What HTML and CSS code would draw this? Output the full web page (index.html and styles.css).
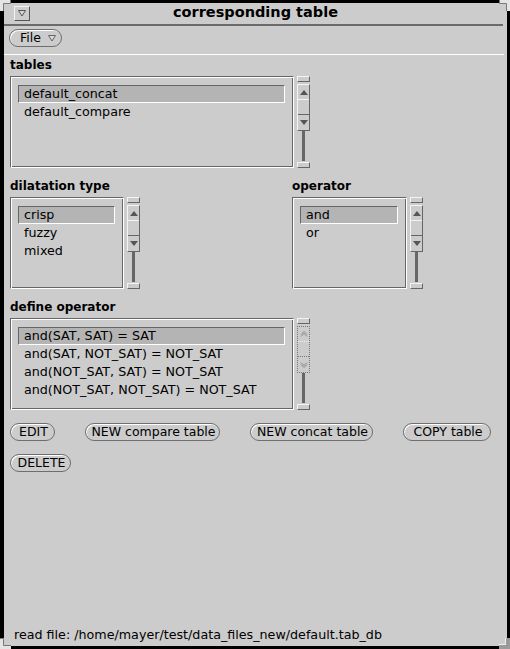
FILE: index.html
```html
<!DOCTYPE html>
<html>
<head>
<meta charset="utf-8">
<title>corresponding table</title>
<link rel="stylesheet" href="styles.css">
</head>
<body>
<div class="frame">
  <svg class="corner tl" width="11" height="11" viewBox="0 0 11 11"><path d="M0 0H11V4H4V11H0Z" fill="#e4e4e4"/><path d="M10.5 0V3.5H3.5V11" stroke="#777" fill="none"/></svg>
  <svg class="corner tr" width="11" height="11" viewBox="0 0 11 11"><path d="M0 0H11V11H7V4H0Z" fill="#e4e4e4"/><path d="M0.5 0V3.5H7.5V11" stroke="#777" fill="none"/></svg>
  <svg class="corner bl" width="11" height="11" viewBox="0 0 11 11"><path d="M0 0H4V7H11V11H0Z" fill="#e4e4e4"/><path d="M0 0.5H3.5V7.5H11" stroke="#777" fill="none"/></svg>
  <svg class="corner br" width="11" height="11" viewBox="0 0 11 11"><path d="M7 0H11V11H0V7H7Z" fill="#9a9a9a"/><path d="M6.5 0V6.5H0" stroke="#eee" fill="none"/></svg>
  <div class="window">
    <div class="titlebar">
      <div class="wmenu"><svg width="8" height="7" viewBox="0 0 8 7"><path d="M0.5 0.5H7.5L4 6Z" fill="#d8d8d8" stroke="#555"/></svg></div>
      <div class="title">corresponding table</div>
      <div></div>
    </div>
    <div class="titlesep"></div>
    <div class="menubar">
      <div class="pill menu">File <svg width="8" height="7" viewBox="0 0 8 7"><path d="M0.5 0.5H7.5L4 6Z" fill="#d8d8d8" stroke="#666"/></svg></div>
    </div>
    <div class="panel">
      <div class="label">tables</div>
      <div class="listrow">
        <div class="list big">
          <div class="item sel">default_concat</div>
          <div class="item">default_compare</div>
        </div>
        <div class="scroll">
          <div class="cap"></div>
          <div class="sbox">
            <div class="sup"><svg width="8" height="5" viewBox="0 0 8 5"><path d="M4 0L8 5H0Z" fill="#555"/></svg></div>
            <div class="smid"></div>
            <div class="sdown"><svg width="8" height="5" viewBox="0 0 8 5"><path d="M0 0H8L4 5Z" fill="#555"/></svg></div>
          </div>
          <div class="cable"></div>
          <div class="cap"></div>
        </div>
      </div>

      <div class="cols">
        <div class="col">
          <div class="label">dilatation type</div>
          <div class="listrow">
            <div class="list small">
              <div class="item sel">crisp</div>
              <div class="item">fuzzy</div>
              <div class="item">mixed</div>
            </div>
            <div class="scroll">
              <div class="cap"></div>
              <div class="sbox">
                <div class="sup"><svg width="8" height="5" viewBox="0 0 8 5"><path d="M4 0L8 5H0Z" fill="#555"/></svg></div>
                <div class="smid"></div>
                <div class="sdown"><svg width="8" height="5" viewBox="0 0 8 5"><path d="M0 0H8L4 5Z" fill="#555"/></svg></div>
              </div>
              <div class="cable"></div>
              <div class="cap"></div>
            </div>
          </div>
        </div>
        <div class="col">
          <div class="label">operator</div>
          <div class="listrow">
            <div class="list small op">
              <div class="item sel">and</div>
              <div class="item">or</div>
            </div>
            <div class="scroll">
              <div class="cap"></div>
              <div class="sbox">
                <div class="sup"><svg width="8" height="5" viewBox="0 0 8 5"><path d="M4 0L8 5H0Z" fill="#555"/></svg></div>
                <div class="smid"></div>
                <div class="sdown"><svg width="8" height="5" viewBox="0 0 8 5"><path d="M0 0H8L4 5Z" fill="#555"/></svg></div>
              </div>
              <div class="cable"></div>
              <div class="cap"></div>
            </div>
          </div>
        </div>
      </div>

      <div class="label gap">define operator</div>
      <div class="listrow">
        <div class="list big">
          <div class="item sel">and(SAT, SAT) = SAT</div>
          <div class="item">and(SAT, NOT_SAT) = NOT_SAT</div>
          <div class="item">and(NOT_SAT, SAT) = NOT_SAT</div>
          <div class="item">and(NOT_SAT, NOT_SAT) = NOT_SAT</div>
        </div>
        <div class="scroll">
          <div class="cap"></div>
          <div class="sbox inactive">
            <div class="sup"><svg width="8" height="6" viewBox="0 0 8 6"><path d="M1 3.5L4 0.5L7 3.5M1 5.5L4 2.5L7 5.5" fill="none" stroke="#888"/></svg></div>
            <div class="smid"></div>
            <div class="sdown"><svg width="8" height="6" viewBox="0 0 8 6"><path d="M1 0.5L4 3.5L7 0.5M1 2.5L4 5.5L7 2.5" fill="none" stroke="#888"/></svg></div>
          </div>
          <div class="cable"></div>
          <div class="cap"></div>
        </div>
      </div>

      <div class="btnrow">
        <div class="pill b-edit">EDIT</div>
        <div class="pill b-newcmp">NEW compare table</div>
        <div class="pill b-newcat">NEW concat table</div>
        <div class="pill b-copy">COPY table</div>
      </div>
      <div class="btnrow">
        <div class="pill b-del">DELETE</div>
      </div>
    </div>
    <div class="status">read file: /home/mayer/test/data_files_new/default.tab_db</div>
  </div>
</div>
</body>
</html>
```
FILE: styles.css
```css
* { box-sizing: border-box; margin: 0; padding: 0; }
body {
  margin: 0;
  background: #000;
  font-family: "DejaVu Sans", sans-serif;
  font-size: 12.7px;
  color: #000;
}
.frame {
  position: relative;
  width: 510px;
  height: 649px;
  background: #000;
  padding: 3px 3px 3px 4px;
}
.corner { position: absolute; display: block; }
.tl { top: 0; left: 0; }
.tr { top: 0; right: 0; }
.bl { bottom: 0; left: 0; }
.br { bottom: 0; right: 0; }

.window {
  height: 100%;
  background: #cccccc;
  display: flex;
  flex-direction: column;
}
.titlebar {
  height: 21px;
  display: grid;
  grid-template-columns: 1fr auto 1fr;
  align-items: start;
}
.wmenu {
  width: 16px;
  height: 15px;
  margin: 3px 0 0 10px;
  border: 1px solid;
  border-color: #f4f4f4 #555 #555 #f4f4f4;
  display: flex;
  align-items: center;
  justify-content: center;
}
.wmenu svg { display: block; }
.title {
  font-weight: bold;
  font-size: 14.5px;
  line-height: 19px;
}
.titlesep {
  height: 2px;
  background: #6a6a6a;
  margin-right: 4px;
}
.menubar {
  padding: 3px 0 7px 5px;
  border-bottom: 1px solid #fff;
  margin-right: 3px;
  display: flex;
}
.pill {
  height: 18px;
  border-radius: 9px;
  border: 1px solid #6e6e6e;
  box-shadow: inset 1px 1px 0 #fff;
  line-height: 16px;
  font-size: 12.5px;
  padding: 0 0 0 2px;
  white-space: nowrap;
  display: flex;
  align-items: center;
  justify-content: center;
}
.pill.menu { padding: 0 6px 0 10px; gap: 7px; width: 53px; justify-content: flex-start; }
.pill.menu svg { display: block; flex: none; }
.b-edit { width: 45px; }
.b-newcmp { width: 135px; }
.b-newcat { width: 123px; }
.b-copy { width: 88px; }
.b-del { width: 61px; }

.panel {
  flex: 1;
  padding: 3px 0 0 6px;
}
.label {
  font-weight: bold;
  font-size: 12px;
  height: 14px;
  line-height: 14px;
  margin-bottom: 4px;
}
.label.gap { margin-top: 11px; }
.listrow {
  display: flex;
  gap: 3px;
  height: 92px;
}
.list {
  border: 1px solid;
  border-color: #666 #fff #fff #666;
  box-shadow: inset 1px 1px 0 #fff, inset -1px -1px 0 #666;
  padding: 8px 8px 0 7px;
}
.list.big { width: 284px; }
.list.small { width: 114px; }
.list.small.op { width: 115px; }
.item {
  height: 18px;
  line-height: 16px;
  padding-left: 5px;
  border: 1px solid transparent;
  white-space: nowrap;
}
.item.sel {
  background: #b4b4b4;
  border-color: #666 #fff #fff #666;
}

.scroll {
  width: 13px;
  display: flex;
  flex-direction: column;
  align-items: center;
}
.cap {
  width: 13px;
  height: 6px;
  border: 1px solid;
  border-color: #f4f4f4 #666 #666 #f4f4f4;
}
.sbox {
  width: 13px;
  height: 47px;
  margin-top: 2px;
  border: 1px solid;
  border-color: #f4f4f4 #666 #666 #f4f4f4;
  display: flex;
  flex-direction: column;
}
.sup, .smid, .sdown {
  display: flex;
  align-items: center;
  justify-content: center;
}
.sup { height: 15px; border-bottom: 1px solid #f4f4f4; }
.smid { height: 15px; border-bottom: 1px solid #666; }
.sdown { flex: 1; }
.sup svg, .sdown svg { display: block; }
.sbox.inactive {
  border: 1px dotted #777;
}
.sbox.inactive .sup { border-bottom: 1px dotted #eee; }
.sbox.inactive .smid { border-bottom: 1px dotted #777; }
.cable {
  width: 3px;
  flex: 1;
  background: #666;
  margin-bottom: 1px;
}

.cols {
  display: grid;
  grid-template-columns: 282px auto;
  margin-top: 11px;
}

.btnrow {
  display: flex;
  gap: 30px;
  margin-top: 13px;
}

.status {
  height: 18px;
  line-height: 14px;
  padding: 0 0 4px 10px;
  white-space: nowrap;
}
```
